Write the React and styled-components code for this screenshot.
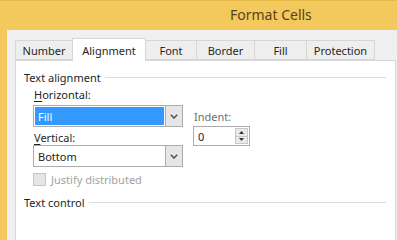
import React from 'react'
import styled, { createGlobalStyle } from 'styled-components'

const GlobalStyle = createGlobalStyle`
  html, body {
    margin: 0;
    padding: 0;
    width: 397px;
    height: 100%;
    overflow: hidden;
    background: #f3c95d;
  }
  * { box-sizing: border-box; }
`

const Frame = styled.div`
  width: 397px;
  height: 100vh;
  min-height: 214px;
  overflow: hidden;
  background: #f3c95d;
  border-top: 1px solid #e3b845;
  display: flex;
  flex-direction: column;
  font-family: "Noto Sans", "Open Sans", sans-serif;
  font-size: 11px;
  color: #1e1e1e;
`

const TitleBar = styled.div`
  height: 29px;
  flex-shrink: 0;
  display: flex;
  align-items: center;
  padding-left: 230px;
  padding-bottom: 2px;
  font-size: 14px;
  color: #57441a;
`

const Body = styled.div`
  flex: 1;
  margin-left: 7px;
  background: #f0f0f0;
  padding: 8px 0 0 8px;
  display: flex;
  flex-direction: column;
  min-height: 0;
`

const TabRow = styled.div`
  display: flex;
  align-items: flex-end;
  height: 22px;
  flex-shrink: 0;
  position: relative;
  z-index: 1;
  margin-left: 1px;
`

const Tab = styled.div`
  width: ${p => p.w}px;
  height: ${p => (p.active ? 23 : 20)}px;
  margin-bottom: ${p => (p.active ? -1 : 0)}px;
  margin-left: -1px;
  display: flex;
  align-items: center;
  justify-content: center;
  padding-top: ${p => (p.active ? 0 : 1)}px;
  background: ${p => (p.active ? '#ffffff' : '#eeeeee')};
  border: 1px solid #d6d6d6;
  border-bottom: ${p => (p.active ? 'none' : '1px solid #d6d6d6')};
  color: #262626;
`

const Panel = styled.div`
  flex: 1;
  min-height: 0;
  overflow: hidden;
  width: 381px;
  background: #ffffff;
  border: 1px solid #d6d6d6;
  border-bottom: none;
  padding: 8px 0 0 8px;
  display: flex;
  flex-direction: column;
`

const GroupHeader = styled.div`
  display: flex;
  align-items: center;
  height: 16px;
  flex-shrink: 0;
  padding-right: 9px;
  &::after {
    content: '';
    flex: 1;
    height: 1px;
    background: #dcdcdc;
    margin-left: 4px;
    margin-top: 1px;
  }
`

const AlignRow = styled.div`
  display: flex;
  flex-shrink: 0;
  padding-left: 9px;
  gap: 10px;
`

const Column = styled.div`
  display: flex;
  flex-direction: column;
`

const Label = styled.div`
  height: 16px;
  display: flex;
  align-items: center;
  margin-left: 1px;
  color: ${p => (p.muted ? '#6e6e6e' : '#1e1e1e')};
  u { text-decoration: underline; text-underline-offset: 2px; }
`

const Select = styled.div`
  width: 150px;
  height: 22px;
  border: 1px solid #acacac;
  background: #ffffff;
  display: flex;
  padding: 1px;
`

const SelectValue = styled.div`
  flex: 1;
  display: flex;
  align-items: center;
  padding-left: 3px;
  background: ${p => (p.selected ? '#3399ff' : 'transparent')};
  color: ${p => (p.selected ? '#ffffff' : '#1e1e1e')};
  margin-right: 1px;
`

const DropButton = styled.div`
  width: 18px;
  margin: -2px -2px -2px 0;
  border: 1px solid #acacac;
  background: #e6e6e6;
  display: flex;
  align-items: center;
  justify-content: center;
`

const Spin = styled.div`
  width: 57px;
  height: 20px;
  border: 1px solid #acacac;
  background: #ffffff;
  display: flex;
  padding: 1px 1px 1px 4px;
`

const SpinValue = styled.div`
  flex: 1;
  display: flex;
  align-items: center;
`

const SpinButtons = styled.div`
  width: 13px;
  display: flex;
  flex-direction: column;
  border: 1px solid #c8c8c8;
  background: #e9e9e9;
`

const SpinHalf = styled.div`
  flex: 1;
  display: flex;
  align-items: center;
  justify-content: center;
  & + & { border-top: 1px solid #c8c8c8; }
`

const CheckRow = styled.div`
  display: flex;
  align-items: center;
  height: 16px;
  gap: 5px;
  margin-top: 4px;
  color: #a2a2a2;
`

const Box = styled.div`
  width: 13px;
  height: 13px;
  border: 1px solid #c6c6c6;
  background: #e6e6e6;
`

const Gap = styled.div`
  height: ${p => p.h}px;
  flex-shrink: 0;
`

const Chevron = () => (
  <svg width="8" height="5" viewBox="0 0 8 5">
    <path d="M0.8 0.8 L4 4 L7.2 0.8" fill="none" stroke="#505050" strokeWidth="1.5" />
  </svg>
)

const Arrow = ({ up }) => (
  <svg width="5" height="3" viewBox="0 0 5 3">
    <path d={up ? 'M0 3 L2.5 0 L5 3 Z' : 'M0 0 L2.5 3 L5 0 Z'} fill="#333" />
  </svg>
)

const tabs = [
  { name: 'Number', w: 58 },
  { name: 'Alignment', w: 74, active: true },
  { name: 'Font', w: 52 },
  { name: 'Border', w: 59 },
  { name: 'Fill', w: 53 },
  { name: 'Protection', w: 69 },
]

const App = () => {
  return (
    <>
      <GlobalStyle />
      <Frame>
        <TitleBar>Format Cells</TitleBar>
        <Body>
          <TabRow>
            {tabs.map(t => (
              <Tab key={t.name} w={t.w} active={t.active}>{t.name}</Tab>
            ))}
          </TabRow>
          <Panel>
            <GroupHeader>Text alignment</GroupHeader>
            <Gap h={1} />
            <AlignRow>
              <Column>
                <Label><span><u>H</u>orizontal:</span></Label>
                <Gap h={3} />
                <Select>
                  <SelectValue selected>Fill</SelectValue>
                  <DropButton><Chevron /></DropButton>
                </Select>
                <Gap h={2} />
                <Label><span><u>V</u>ertical:</span></Label>
                <Gap h={0} />
                <Select>
                  <SelectValue>Bottom</SelectValue>
                  <DropButton><Chevron /></DropButton>
                </Select>
                <CheckRow>
                  <Box />
                  <span>Justify distributed</span>
                </CheckRow>
              </Column>
              <Column>
                <Gap h={22} />
                <Label muted>Indent:</Label>
                <Gap h={2} />
                <Spin>
                  <SpinValue>0</SpinValue>
                  <SpinButtons>
                    <SpinHalf><Arrow up /></SpinHalf>
                    <SpinHalf><Arrow /></SpinHalf>
                  </SpinButtons>
                </Spin>
              </Column>
            </AlignRow>
            <Gap h={7} />
            <GroupHeader>Text control</GroupHeader>
          </Panel>
        </Body>
      </Frame>
    </>
  )
}

export default App
